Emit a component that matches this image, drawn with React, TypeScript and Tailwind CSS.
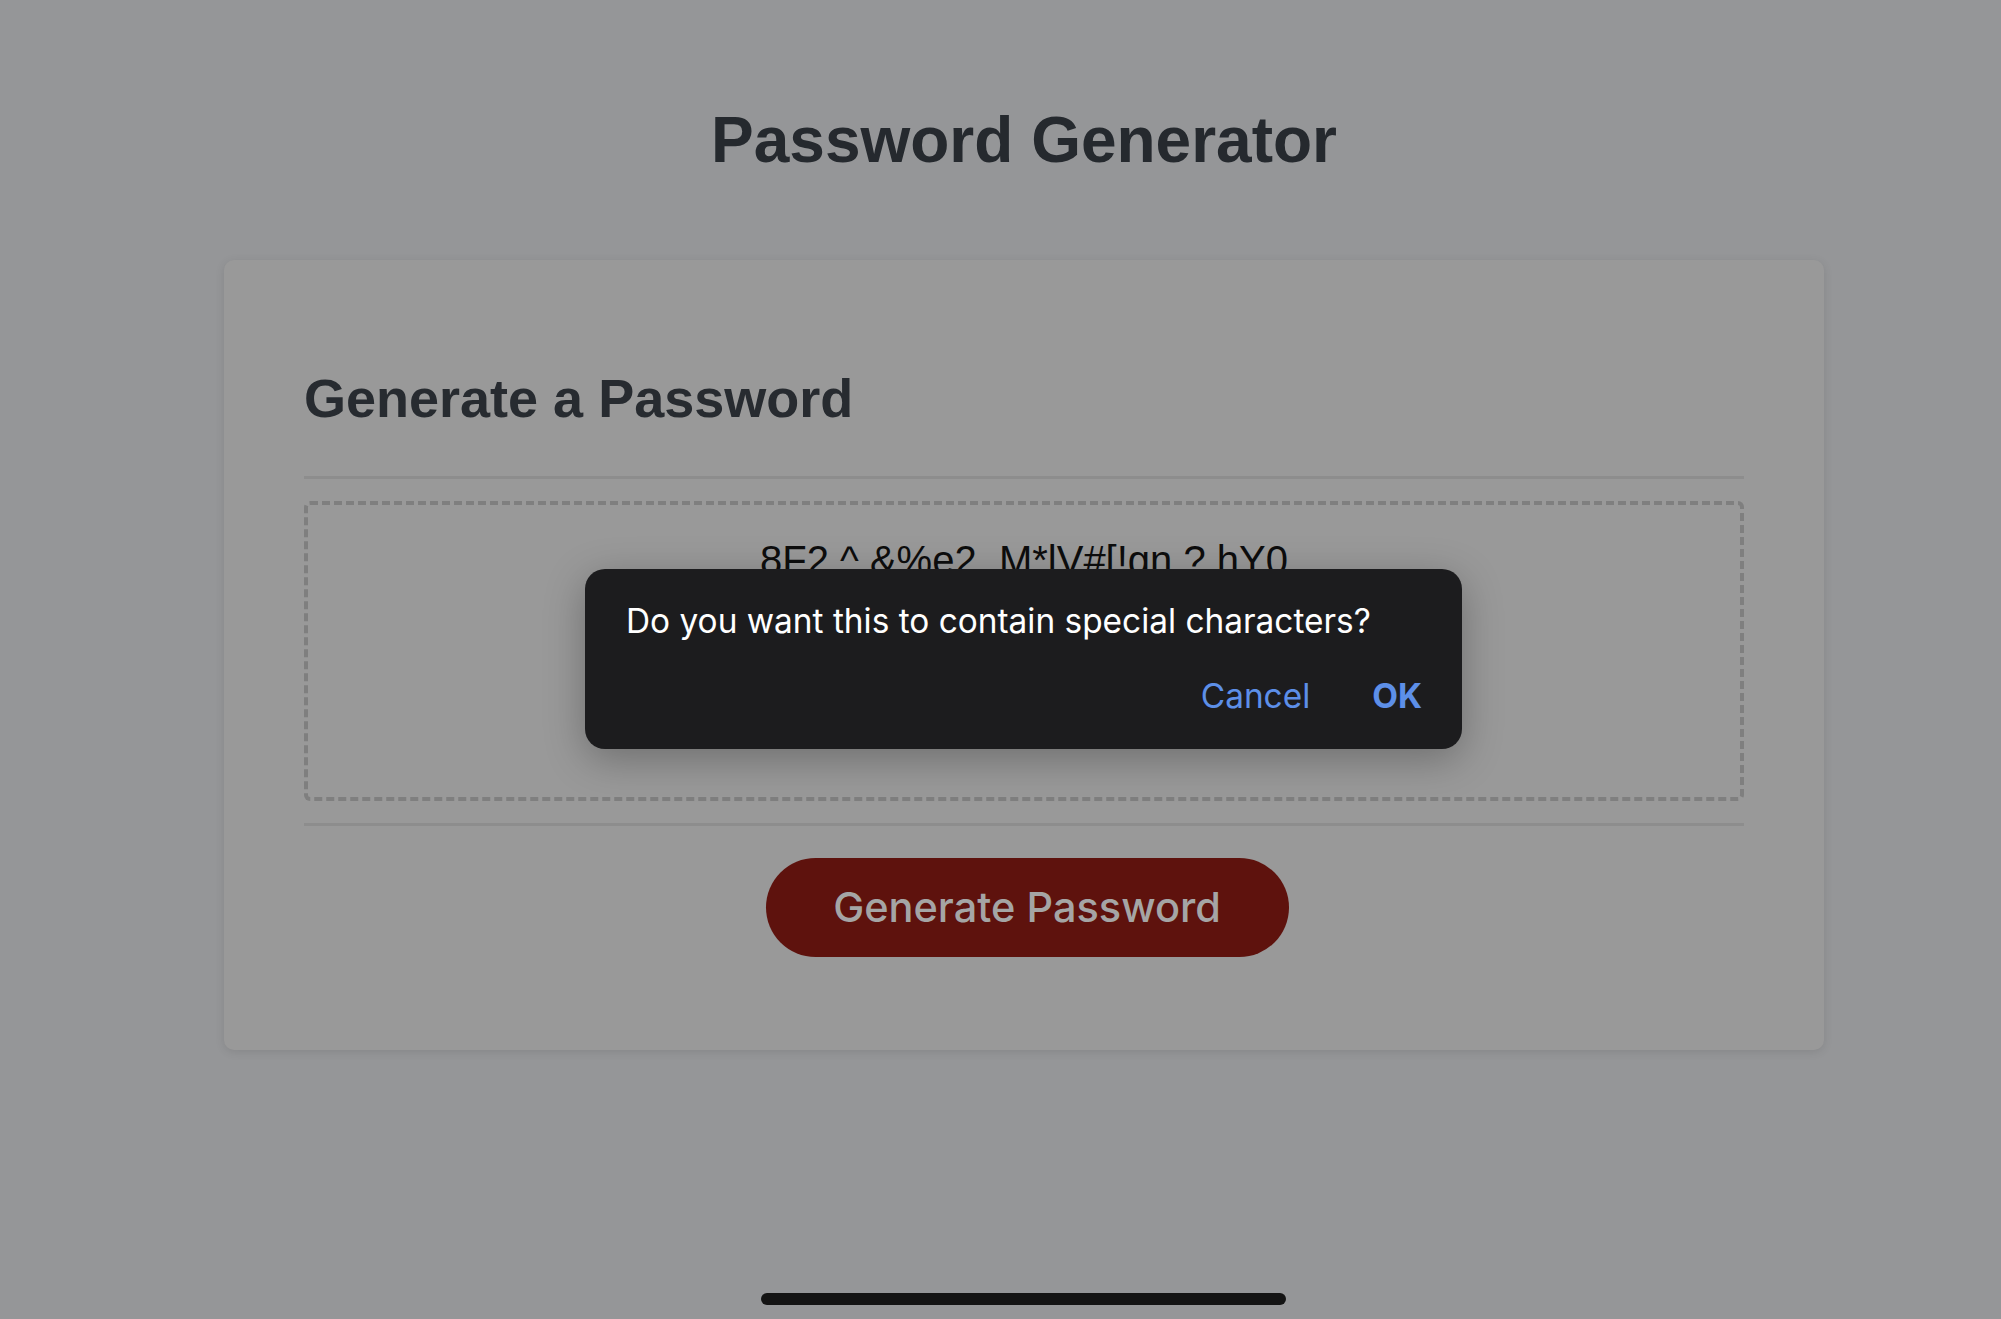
import React from 'react';

export default function App() {
  const password = '8F2 ^ &%e2_M*lV#[!gn ? hY0';

  return (
    <div className="relative h-[1319px] w-full overflow-hidden bg-[#959698] font-['Liberation_Sans',Arial,sans-serif]">
      {/* page */}
      <div className="ml-[224px] w-[1600px]">
        <h1 className="pt-[108px] text-center text-[64px] font-bold leading-none text-[#25292e]">
          Password Generator
        </h1>

        {/* card */}
        <div className="mt-[88px] rounded-[10px] bg-[#999999] px-[80px] pt-[111px] pb-[93px] shadow-[0_2px_10px_rgba(0,0,0,0.1)]">
          <h2 className="text-[54px] font-bold leading-none text-[#272b30]">Generate a Password</h2>
          <div className="mt-[51px] h-[3px] bg-[#8d8d8d]"></div>

          <div className="mt-[22px] h-[300px] rounded-[6px] border-[4px] border-dashed border-[#7f7f7f] pt-[35px] text-center">
            <p className="text-[40px] leading-none text-[#0d0d0d]">{password}</p>
          </div>

          <div className="mt-[22px] h-[3px] bg-[#8d8d8d]"></div>

          <div className="mt-[32px] flex justify-center pl-[6px]">
            <button className="flex h-[99px] w-[523px] items-center justify-center rounded-full bg-[#5e120d] font-['Inter',sans-serif] text-[41.5px] font-medium text-[#a5a5a5]">
              Generate Password
            </button>
          </div>
        </div>
      </div>

      {/* alert */}
      <div className="absolute left-[585px] top-[569px] h-[180px] w-[877px] rounded-[20px] bg-[#1c1c1e] pl-[41px] pr-[40px] pt-[36px] font-['Inter',sans-serif] shadow-[0_10px_40px_rgba(0,0,0,0.28)]">
        <p className="text-[33.4px] leading-none text-white">Do you want this to contain special characters?</p>
        <div className="mt-[42px] flex justify-end gap-[62px] text-[33.4px] leading-none text-[#5d8fe8]">
          <span>Cancel</span>
          <span className="font-bold">OK</span>
        </div>
      </div>

      {/* home indicator */}
      <div className="absolute left-[761px] top-[1293px] h-[12px] w-[525px] rounded-full bg-[#141414]"></div>
    </div>
  );
}
